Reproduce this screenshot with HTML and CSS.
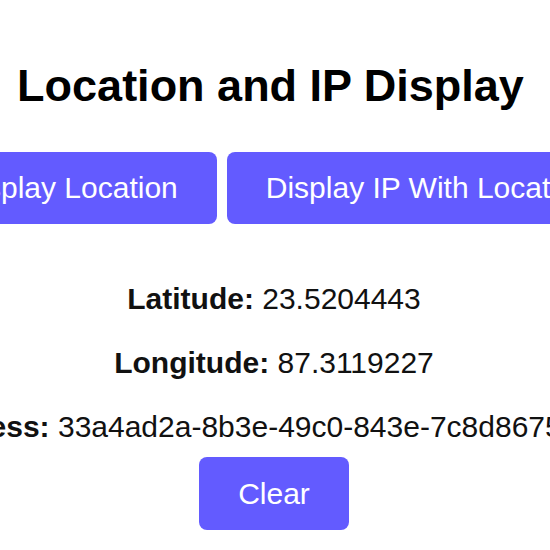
FILE: index.html
```html
<!DOCTYPE html>
<html lang="en">
<head>
<meta charset="utf-8">
<title>Location and IP Display</title>
<link rel="stylesheet" href="styles.css">
</head>
<body>
  <main class="app">
    <h1 class="title">Location and IP Display</h1>
    <div class="actions">
      <button class="btn">Display Location</button>
      <button class="btn">Display IP With Location</button>
    </div>
    <div class="info">
      <p class="row"><strong>Latitude:</strong> 23.5204443</p>
      <p class="row"><strong>Longitude:</strong> 87.3119227</p>
      <p class="row"><strong>Address:</strong> 33a4ad2a-8b3e-49c0-843e-7c8d8675e1a4</p>
    </div>
    <button class="btn btn-clear">Clear</button>
  </main>
</body>
</html>
```

FILE: styles.css
```css
html {
  overflow: hidden;
}
body {
  margin: 0;
  font-family: "Liberation Sans", Arial, sans-serif;
  color: #000;
  background: #fff;
}
.app {
  display: flex;
  flex-direction: column;
  align-items: center;
  text-align: center;
  padding: 8px 10px 8px 8px;
}
.title {
  font-size: 45px;
  font-weight: 700;
  margin: 52px 0 40px;
  padding-right: 7px;
  line-height: normal;
  white-space: nowrap;
}
.actions {
  display: flex;
  gap: 10px;
  white-space: nowrap;
}
.btn {
  font-family: "Liberation Sans", Arial, sans-serif;
  font-size: 30px;
  line-height: normal;
  color: #fff;
  background: #635bff;
  border: none;
  border-radius: 8px;
  padding: 19px 39px;
  white-space: nowrap;
  flex: none;
}
.btn-clear {
  padding: 19.5px 39px;
}
.info {
  margin-top: 58px;
  margin-bottom: 13px;
  display: flex;
  flex-direction: column;
  align-items: center;
  gap: 30px;
}
.row {
  margin: 0;
  font-size: 30px;
  line-height: normal;
  white-space: nowrap;
  color: #111;
}
```
